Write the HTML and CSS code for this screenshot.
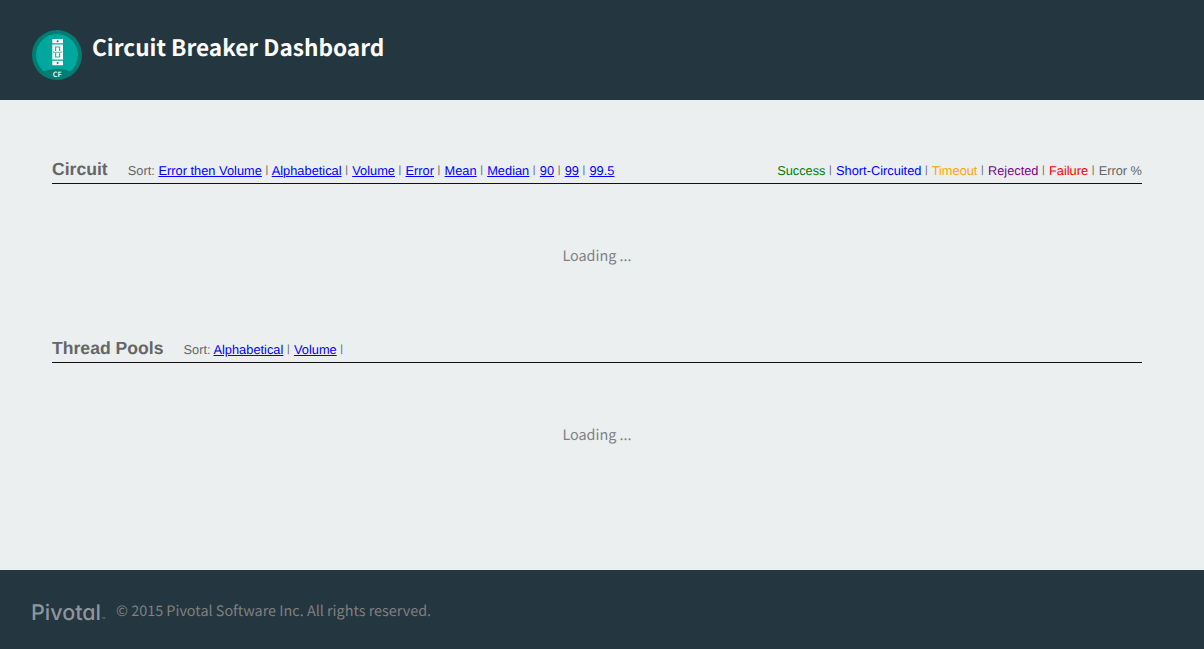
FILE: index.html
```
<!DOCTYPE html>
<html lang="en">
<head>
<meta charset="utf-8">
<title>Circuit Breaker Dashboard</title>
<link rel="stylesheet" href="styles.css">
</head>
<body>
<header class="header">
  <svg class="badge" width="50" height="50" viewBox="0 0 50 50" aria-hidden="true">
    <defs><clipPath id="disc"><circle cx="25" cy="25" r="21"/></clipPath></defs>
    <circle cx="25" cy="25" r="25" fill="#007d72"/>
    <circle cx="25" cy="25" r="21" fill="#00a79d"/>
    <path clip-path="url(#disc)" d="M0 41H13Q25 36.500 37 41H50V50H0Z" fill="#007d72"/>
    <path d="M20.300 9h10.700v4.200H20.300zM20.300 14.400h10.700v15H20.300zM20.300 30.700h10.700v4.500H20.300z" fill="#fff"/>
    <circle cx="25.600" cy="11.200" r="1" fill="#007d72"/>
    <circle cx="25.600" cy="32.900" r="1" fill="#007d72"/>
    <path d="M23.600 21v-4h4v4M23.600 23.300v3.700h4v-3.700" fill="none" stroke="#35aaa2" stroke-width="1.200"/>
    <path d="M21.500 21.300v1h8.200v-1" fill="none" stroke="#55b9b2" stroke-width="1"/>
    <text class="badge-text" x="25.200" y="47" text-anchor="middle">CF</text>
  </svg>
  <h1 class="title">Circuit Breaker Dashboard</h1>
</header>
<main class="main">
  <section class="section">
    <div class="bar">
      <h2 class="heading">Circuit</h2>
      <div class="sort">Sort: <a href="#">Error then Volume</a> <span class="sep">|</span> <a href="#">Alphabetical</a> <span class="sep">|</span> <a href="#">Volume</a> <span class="sep">|</span> <a href="#">Error</a> <span class="sep">|</span> <a href="#">Mean</a> <span class="sep">|</span> <a href="#">Median</a> <span class="sep">|</span> <a href="#">90</a> <span class="sep">|</span> <a href="#">99</a> <span class="sep">|</span> <a href="#">99.5</a></div>
      <div class="legend"><span class="success">Success</span> <span class="sep">|</span> <span class="short">Short-Circuited</span> <span class="sep">|</span> <span class="timeout">Timeout</span> <span class="sep">|</span> <span class="rejected">Rejected</span> <span class="sep">|</span> <span class="failure">Failure</span> <span class="sep">|</span> <span>Error %</span></div>
    </div>
    <div class="loading">Loading ...</div>
  </section>
  <section class="section">
    <div class="bar">
      <h2 class="heading">Thread Pools</h2>
      <div class="sort">Sort: <a href="#">Alphabetical</a> <span class="sep">|</span> <a href="#">Volume</a> <span class="sep">|</span></div>
    </div>
    <div class="loading">Loading ...</div>
  </section>
</main>
<footer class="footer">
  <svg class="logo" width="74" height="26" viewBox="0 0 74 26" role="img" aria-label="Pivotal">
    <text class="logo-text" x="-1" y="20" textLength="70" lengthAdjust="spacingAndGlyphs">Pivotal</text>
    <text class="logo-tm" x="69.500" y="20">™</text>
  </svg>
  <p class="copyright">© 2015 Pivotal Software Inc. All rights reserved.</p>
</footer>
</body>
</html>
```
FILE: styles.css
```
* { box-sizing: border-box; }
body {
  margin: 0;
  height: 649px;
  display: flex;
  flex-direction: column;
  background: #ebeff0;
  color: #666;
  font-family: "Noto Sans CJK SC", "Noto Sans", sans-serif;
  text-rendering: geometricPrecision;
}
.header {
  height: 100px;
  display: flex;
  align-items: flex-start;
  gap: 10px;
  padding: 30px 32px 0;
  background: #243640;
}
.badge { flex: none; }
.badge-text { font: 600 7.5px "Open Sans", sans-serif; fill: #fff; }
.title {
  margin: 0;
  color: #fff;
  font-size: 22.6px;
  font-weight: 700;
  line-height: 33px;
}
.main {
  flex: 1;
  padding: 50px 62px 0 52px;
}
.section { height: 179px; }
.bar {
  height: 34px;
  display: flex;
  align-items: baseline;
  border-bottom: 1px solid #111;
  font: 12.8px/16px "Liberation Sans", Arial, sans-serif;
}
.heading {
  margin: 8px 20px 0 0;
  font-size: 17.6px;
  line-height: 22px;
  font-weight: 700;
}
.sort, .legend { white-space: nowrap; }
.sort { letter-spacing: 0.016px; }
.sort a { color: #00f; }
.legend { margin-left: auto; }
.sep {
  display: inline-block;
  width: 3.4px;
  font-size: 10.5px;
  line-height: 10px;
  vertical-align: 2px;
}
.success { color: green; }
.short { color: #00f; }
.timeout { color: orange; }
.rejected { color: purple; }
.failure { color: red; }
.loading {
  padding-top: 60px;
  color: gray;
  font-size: 14.4px;
  line-height: 24px;
  text-align: center;
}
.footer {
  height: 79px;
  display: flex;
  gap: 10px;
  padding: 29px 32px 0;
  background: #243640;
}
.logo { flex: none; margin-top: 1px; overflow: visible; }
.logo-text {
  font: 500 21.5px Inter, sans-serif;
  font-feature-settings: "cv11";
  fill: #8e959d;
}
.logo-tm { font: 4px "Liberation Sans", sans-serif; fill: #8e959d; }
.copyright {
  margin: 0;
  color: gray;
  font-size: 14.4px;
  line-height: 24px;
}
```
